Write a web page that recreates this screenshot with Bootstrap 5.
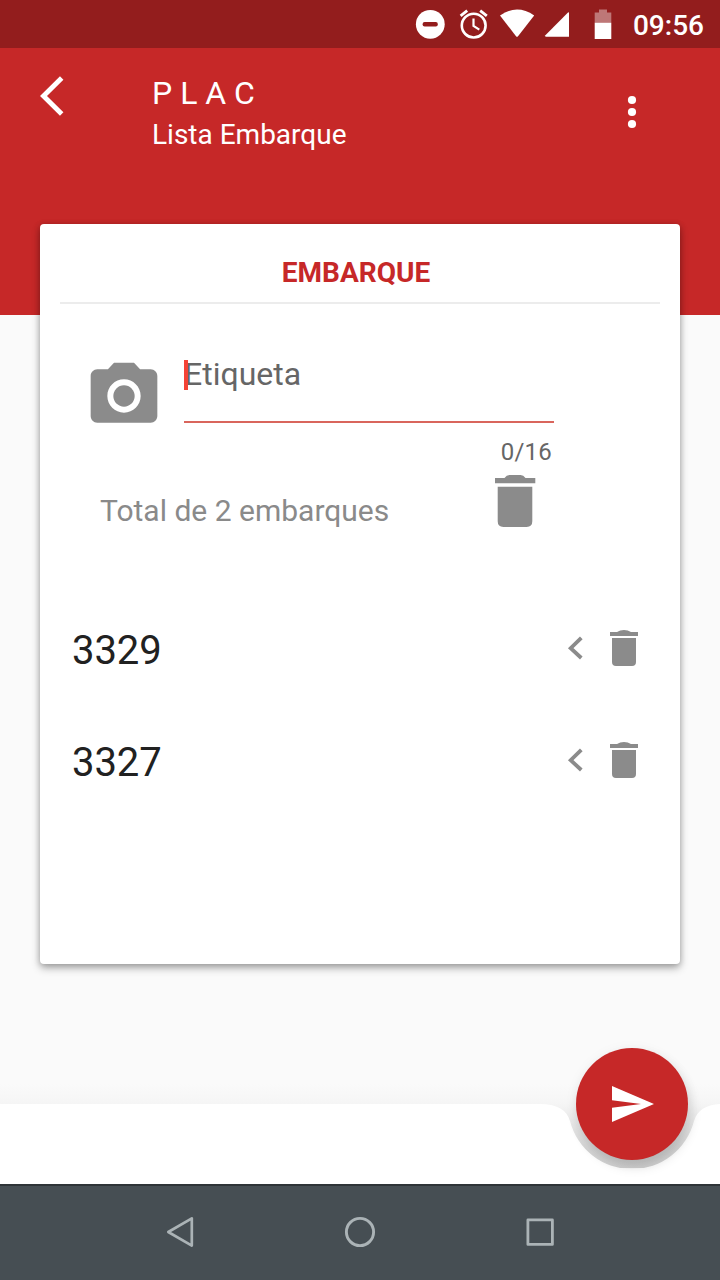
<!DOCTYPE html>
<html lang="pt">
<head>
<meta charset="utf-8">
<meta name="viewport" content="width=device-width, initial-scale=1">
<title>PLAC - Lista Embarque</title>
<link href="https://cdn.jsdelivr.net/npm/bootstrap@5.3.0/dist/css/bootstrap.min.css" rel="stylesheet">
<style>
  body { font-family: Roboto, "Noto Sans", sans-serif; background: #fafafa; line-height: 1; }
  svg { display: block; flex-shrink: 0; }
  .screen { width: 720px; height: 1280px; }
  .statusbar { height: 48px; background: #931d1d; padding-right: 16px; }
  .clock { font-size: 28px; font-weight: 500; margin-left: 20px; padding-top: 3px; }
  .appbar { height: 267px; background: #c62828; padding: 24px 64px 0 32px; }
  .app-title { font-size: 32px; line-height: 42px; }
  .app-sub { font-size: 28px; line-height: 41px; }
  .titles { margin-left: 80px; }
  .panel { width: 640px; height: 740px; margin: -91px auto 0; border-radius: 4px; padding: 0 20px;
    box-shadow: 0 4px 8px rgba(0,0,0,.3), 0 1px 6px rgba(0,0,0,.18); }
  .panel-title { height: 80px; padding: 20px 8px 0 0; font-size: 28px; font-weight: 700; color: #c62828; border-bottom: 2px solid #ececec; }
  .tag-row { height: 120px; padding: 52px 0 0 24px; }
  .tag-field { width: 370px; height: 67px; margin-left: 20px; border-bottom: 2px solid #d9655c; font-size: 32px; color: #666; }
  .caret { width: 4px; height: 30px; background: #f44336; margin-right: -4px; margin-top: 4px; z-index: 1; }
  .tag-label { line-height: 36px; }
  .counter { font-size: 24px; line-height: 28px; color: #666; letter-spacing: .2px; width: 492px; margin-top: 14px; }
  .total-row { height: 72px; padding-left: 40px; }
  .total { font-size: 30px; width: 380px; color: #8a8a8a; padding-top: 18px; }
  .entries { margin-top: 54px; }
  .entry { height: 112px; padding: 0 20px 0 12px; font-size: 40px; color: #212121; letter-spacing: -.1px; }
  .entry-code { padding-top: 6px; }
  .bottombar { height: 80px; }
  .fab { width: 112px; height: 112px; left: 576px; top: -56px; background: #c62828; box-shadow: 3px 7px 12px rgba(0,0,0,.13), 0 2px 14px rgba(0,0,0,.05); }
  .navbuttons { height: 96px; background: #464e53; border-top: 2px solid #2e3437; padding: 0 90px 2px; }
</style>
</head>
<body>
<div class="screen d-flex flex-column overflow-hidden">
  <div class="statusbar d-flex align-items-center justify-content-end text-white">
    <svg width="200" height="48" viewBox="413 0 200 48" fill="#fff">
      <circle cx="430.3" cy="24.3" r="14.4"/><rect x="422.6" y="21.9" width="15.2" height="4.6" rx="2" fill="#931d1d"/>
      <circle cx="473.7" cy="25.6" r="11.9" fill="none" stroke="#fff" stroke-width="2.6"/>
      <path d="M473.5 18.5V26l5.8 3.6" fill="none" stroke="#fff" stroke-width="2.2"/>
      <path d="M460.6 15.8l6.6-5.2M486.8 15.8l-6.6-5.2" stroke="#fff" stroke-width="2.8"/>
      <path d="M500 15.4Q517 3.8 534.2 15.4L518 36.2Q517 37.3 516 36.2Z"/>
      <path d="M568 12.4Q569 12 569 13V36.7H546Q544.4 36.5 545.4 35.2Z"/>
      <path d="M594.7 23V12.6H599V9.6H607V12.6H611.3V23Z" fill="#be7777"/><rect x="594.7" y="22.8" width="16.6" height="16.2"/>
    </svg>
    <span class="clock">09:56</span>
  </div>

  <header class="appbar d-flex align-items-start justify-content-between text-white">
    <div class="d-flex">
      <svg width="40" height="48" viewBox="32 72 40 48"><path d="M61.7 78L43.5 96L61.7 114" fill="none" stroke="#fff" stroke-width="4.9"/></svg>
      <div class="titles">
        <div class="app-title">P L A C</div>
        <div class="app-sub">Lista Embarque</div>
      </div>
    </div>
    <svg width="48" height="80" viewBox="608 72 48 80" fill="#fff"><circle cx="632" cy="100" r="4.1"/><circle cx="632" cy="112" r="4.1"/><circle cx="632" cy="124" r="4.1"/></svg>
  </header>

  <main class="panel bg-white flex-shrink-0">
    <div class="panel-title d-flex align-items-center justify-content-center">EMBARQUE</div>
    <div class="tag-row d-flex align-items-start">
      <svg width="80" height="80" viewBox="0 0 24 24" fill="#8b8b8b"><circle cx="12" cy="12" r="3.2"/><path d="M9 2L7.17 4H4c-1.1 0-2 .9-2 2v12c0 1.1.9 2 2 2h16c1.1 0 2-.9 2-2V6c0-1.1-.9-2-2-2h-3.17L15 2H9zm3 15c-2.76 0-5-2.24-5-5s2.24-5 5-5 5 2.24 5 5-2.24 5-5 5z"/></svg>
      <div class="tag-field d-flex"><span class="caret"></span><span class="tag-label">Etiqueta</span></div>
    </div>
    <div class="counter text-end">0/16</div>
    <div class="total-row d-flex">
      <span class="total d-flex align-items-center">Total de 2 embarques</span>
      <svg width="70" height="72" viewBox="480 466 70 72" fill="#8b8b8b"><path d="M495 478h9.5q2-3 5-3h11q3 0 5 3H535.3v5.3H495zM497.7 486.8h34.6v34.5q0 5.7-5.7 5.7h-23.2q-5.7 0-5.7-5.7z"/></svg>
    </div>
    <div class="entries">
      <div class="entry d-flex align-items-center justify-content-between">
        <span class="entry-code">3329</span>
        <svg width="80" height="48" viewBox="560 624 80 48" fill="#8b8b8b"><path d="M581.3 637.8L570.7 648.2L581.3 658" fill="none" stroke="#8b8b8b" stroke-width="3.8"/><path d="M610 632h7q3-2 7-2t7 2h7v4h-28zM612 638h24v24q0 4-4 4h-16q-4 0-4-4z"/></svg>
      </div>
      <div class="entry d-flex align-items-center justify-content-between">
        <span class="entry-code">3327</span>
        <svg width="80" height="48" viewBox="560 624 80 48" fill="#8b8b8b"><path d="M581.3 637.8L570.7 648.2L581.3 658" fill="none" stroke="#8b8b8b" stroke-width="3.8"/><path d="M610 632h7q3-2 7-2t7 2h7v4h-28zM612 638h24v24q0 4-4 4h-16q-4 0-4-4z"/></svg>
      </div>
    </div>
  </main>

  <div class="bottombar position-relative mt-auto">
    <svg width="720" height="80" viewBox="0 0 720 80" overflow="visible">
      <defs>
        <linearGradient id="lift" x1="0" y1="1" x2="0" y2="0"><stop offset="0" stop-color="#f5f5f5"/><stop offset="1" stop-color="#fafafa"/></linearGradient>
        <linearGradient id="notch" x1="0" y1="0" x2="0" y2="1"><stop offset="0" stop-color="#f5f5f5"/><stop offset=".7" stop-color="#d6d6d6"/><stop offset="1" stop-color="#d2d2d2"/></linearGradient>
      </defs>
      <rect y="-20" width="720" height="21" fill="url(#lift)"/>
      <rect width="720" height="64" fill="url(#notch)"/>
      <path d="M0 0H540Q565 0 570 17A64 64 0 0 0 694 17Q699 0 724 0V80H0Z" fill="#fff"/>
    </svg>
    <button type="button" aria-label="Enviar" class="fab btn border-0 rounded-circle p-0 position-absolute d-flex align-items-center justify-content-center">
      <svg width="112" height="112" viewBox="576 1048 112 112" fill="#fff"><path d="M612 1086L654 1104L612 1122V1107.8L641 1104L612 1100.2Z"/></svg>
    </button>
  </div>
  <nav class="navbuttons d-flex flex-shrink-0 align-items-center" aria-label="Sistema">
    <div class="d-flex w-100">
      <svg width="180" height="48" viewBox="90 1208 180 48" fill="none" stroke="#abb3b6" stroke-width="2.7" stroke-linejoin="round"><path d="M191.8 1218.3V1245.6L168.3 1232Z"/></svg>
      <svg width="180" height="48" viewBox="270 1208 180 48" fill="none" stroke="#abb3b6" stroke-width="2.9"><circle cx="360" cy="1232" r="13.6"/></svg>
      <svg width="180" height="48" viewBox="450 1208 180 48" fill="none" stroke="#abb3b6" stroke-width="2.8" stroke-linejoin="round"><rect x="527.9" y="1219.9" width="24.5" height="24.5"/></svg>
    </div>
  </nav>
</div>
<script src="https://cdn.jsdelivr.net/npm/bootstrap@5.3.0/dist/js/bootstrap.bundle.min.js"></script>
</body>
</html>
